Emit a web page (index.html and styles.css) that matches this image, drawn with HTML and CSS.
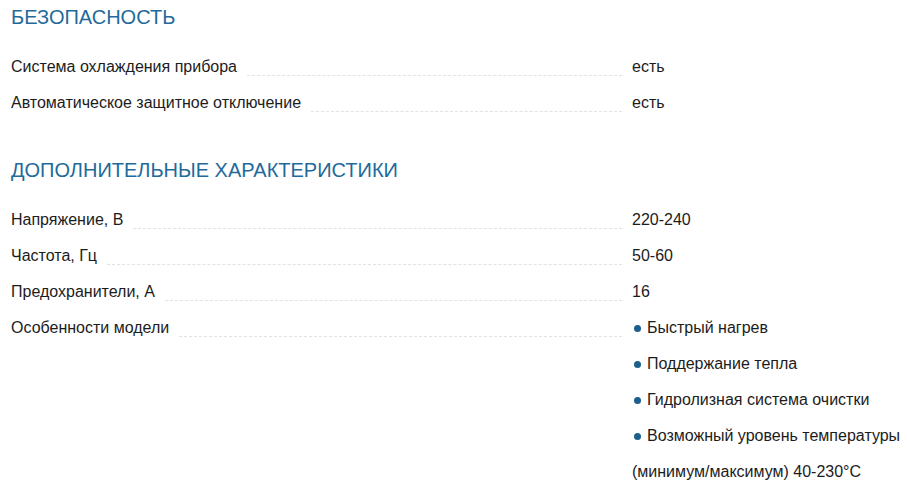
FILE: index.html
```html
<!DOCTYPE html>
<html lang="ru">
<head>
<meta charset="utf-8">
<link rel="stylesheet" href="styles.css">
</head>
<body>
<div class="specs">
  <section class="section">
    <h2 class="section-title">БЕЗОПАСНОСТЬ</h2>
    <div class="row">
      <div class="label"><span class="label-text">Система охлаждения прибора</span><span class="filler"></span></div>
      <div class="value">есть</div>
    </div>
    <div class="row">
      <div class="label"><span class="label-text">Автоматическое защитное отключение</span><span class="filler"></span></div>
      <div class="value">есть</div>
    </div>
  </section>
  <section class="section">
    <h2 class="section-title">ДОПОЛНИТЕЛЬНЫЕ ХАРАКТЕРИСТИКИ</h2>
    <div class="row">
      <div class="label"><span class="label-text">Напряжение, В</span><span class="filler"></span></div>
      <div class="value">220-240</div>
    </div>
    <div class="row">
      <div class="label"><span class="label-text">Частота, Гц</span><span class="filler"></span></div>
      <div class="value">50-60</div>
    </div>
    <div class="row">
      <div class="label"><span class="label-text">Предохранители, А</span><span class="filler"></span></div>
      <div class="value">16</div>
    </div>
    <div class="row">
      <div class="label"><span class="label-text">Особенности модели</span><span class="filler"></span></div>
      <div class="value">
        <div class="item">Быстрый нагрев</div>
        <div class="item">Поддержание тепла</div>
        <div class="item">Гидролизная система очистки</div>
        <div class="item">Возможный уровень температуры (минимум/максимум) 40-230°C</div>
      </div>
    </div>
  </section>
</div>
</body>
</html>
```
FILE: styles.css
```css
html, body {
  margin: 0;
  padding: 0;
  background: #ffffff;
}
body {
  font-family: "Liberation Sans", Arial, sans-serif;
  color: #1c1c1c;
}
.specs {
  padding: 5px 0 0 11px;
}
.section {
  margin-bottom: 37px;
}
.section:last-child {
  margin-bottom: 0;
}
.section-title {
  margin: 0 0 20px 0;
  font-size: 20px;
  line-height: 24px;
  font-weight: normal;
  color: #1f6a9a;
}
.row {
  display: grid;
  grid-template-columns: 611px 1fr;
  column-gap: 10px;
  font-size: 16px;
  line-height: 36px;
}
.label {
  display: flex;
  align-items: flex-start;
  height: 36px;
}
.label-text {
  white-space: nowrap;
  padding-right: 10px;
}
.filler {
  flex: 1;
  height: 26px;
  border-bottom: 1px dashed #e2e2e2;
}
.value {
  min-width: 0;
}
.item::before {
  content: "";
  display: inline-block;
  width: 7px;
  height: 7px;
  border-radius: 50%;
  background: #1b5f8c;
  margin: 0 6px 1px 2px;
  vertical-align: middle;
}
```
